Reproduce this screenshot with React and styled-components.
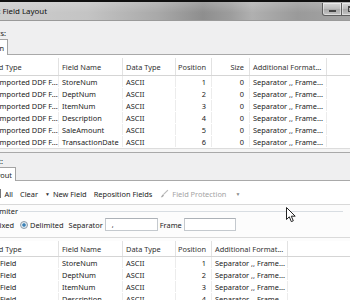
import React from "react";
import styled, { createGlobalStyle } from "styled-components";

const GlobalStyle = createGlobalStyle`
  html, body { margin: 0; padding: 0; background: #f0f0f0; }
  body { font-family: "Noto Sans", "Open Sans", sans-serif; font-size: 7.4px; color: #1b1b1b; }
  * { box-sizing: border-box; }
`;

const Window = styled.div`
  position: relative;
  width: 350px;
  height: 300px;
  overflow: hidden;
  background: #efeff0;
  display: flex;
  flex-direction: column;
`;

const TitleBar = styled.div`
  flex: none;
  height: 21px;
  border-top: 2px solid #101010;
  background:
    linear-gradient(180deg, rgba(255,255,255,0.18) 0%, rgba(255,255,255,0) 60%),
    linear-gradient(90deg, #cdcdcd 0%, #c4c4c4 25%, #a9a9a9 45%, #8e8e8e 58%, #9d9d9d 66%, #b0b0b0 72%, #9a9a9a 85%, #a4a4a4 100%);
  display: flex;
  align-items: center;
  justify-content: space-between;
  border-bottom: 1px solid #9a9a9a;
`;

const Title = styled.div`
  flex: none;
  width: 140px;
  margin-left: -93px;
  text-align: right;
  font-size: 7.9px;
  color: #111;
  white-space: nowrap;
`;

const CaptionButtons = styled.div`
  display: flex;
  align-self: flex-start;
  margin-top: 1px;
  margin-right: -13px;
`;

const CaptionButton = styled.div`
  width: ${(p) => p.$w}px;
  height: 13px;
  border: 1px solid #5e5e5e;
  border-top: none;
  border-radius: ${(p) => (p.$first ? "0 0 0 3px" : "0")};
  margin-left: -1px;
  background: linear-gradient(180deg, #d8d8d8 0%, #b9b9b9 50%, #a8a8a8 51%, #c4c4c4 100%);
  box-shadow: inset 0 0 0 1px rgba(255,255,255,0.45);
  display: flex;
  align-items: center;
  justify-content: center;
`;

const MinGlyph = styled.div`
  width: 7px;
  height: 2px;
  background: #444;
  margin-top: 4px;
`;

const MaxGlyph = styled.div`
  width: 8px;
  height: 6px;
  border: 1px solid #444;
  border-top-width: 2px;
`;

const Content = styled.div`
  flex: 1;
  margin-left: -40px;
  width: 390px;
  display: flex;
  flex-direction: column;
`;

const SectionHead = styled.div`
  display: flex;
  flex-direction: column;
  padding-top: ${(p) => p.$pt}px;
`;

const GroupLabel = styled.div`
  width: ${(p) => p.$w}px;
  text-align: right;
  height: 10px;
  line-height: 10px;
  white-space: nowrap;
  margin-bottom: ${(p) => p.$mb}px;
`;

const TabStrip = styled.div`
  display: flex;
  border-bottom: 1px solid #a9a9a9;
`;

const Tab = styled.div`
  width: ${(p) => p.$w}px;
  height: ${(p) => p.$h}px;
  margin-bottom: -1px;
  background: #fff;
  border: 1px solid #a3a3a3;
  border-bottom: none;
  text-align: right;
  padding-right: 3px;
  line-height: ${(p) => p.$h}px;
  white-space: nowrap;
`;

const Panel = styled.div`
  background: #fff;
  padding-top: ${(p) => p.$pt}px;
`;

const GridWrap = styled.div`
  display: flex;
  flex-direction: column;
`;

const Row = styled.div`
  display: grid;
  grid-template-columns: ${(p) => p.$cols};
  height: ${(p) => p.$h}px;
  background: #fff;
  border-bottom: 1px solid ${(p) => (p.$head ? "#d5d5d5" : "transparent")};
`;

const Cell = styled.div`
  border-right: 1px solid ${(p) => (p.$last ? "transparent" : p.$head ? "#e2e2e2" : "#ececec")};
  padding: 0 ${(p) => (p.$right ? 5 : 3)}px 0 ${(p) => p.$pl ?? 3}px;
  text-align: ${(p) => (p.$right ? "right" : "left")};
  white-space: nowrap;
  overflow: hidden;
  display: flex;
  align-items: center;
  justify-content: ${(p) => (p.$right ? "flex-end" : "flex-start")};
  color: ${(p) => (p.$head ? "#333" : "#1b1b1b")};
`;

const GridBottom = styled.div`
  height: 5px;
  border-top: 1px solid #dcdcdc;
  border-bottom: 1px solid #a9a9a9;
  background: #f4f4f4;
`;

const Toolbar = styled.div`
  height: 24px;
  background: #fff;
  border-bottom: 1px solid #d9d9d9;
  display: flex;
  align-items: center;
  padding-top: 2px;
`;

const ToolItem = styled.div`
  flex: none;
  display: flex;
  align-items: center;
  gap: 3px;
  white-space: nowrap;
  color: ${(p) => (p.$disabled ? "#a3a3a3" : "#1b1b1b")};
  margin-right: ${(p) => p.$mr ?? 7}px;
  width: ${(p) => (p.$w ? `${p.$w}px` : "auto")};
  justify-content: ${(p) => (p.$w ? "flex-end" : "flex-start")};
`;

const Caret = styled.span`
  font-size: 5px;
  color: ${(p) => (p.$disabled ? "#8a8a8a" : "#333")};
  margin-left: ${(p) => p.$ml ?? 0}px;
`;

const OptionsBox = styled.div`
  background: #fcfcfc;
  display: flex;
  flex-direction: column;
`;

const Legend = styled.div`
  display: flex;
  align-items: center;
  height: 10px;
  margin-top: 1px;
`;

const LegendText = styled.div`
  width: 58px;
  text-align: right;
  white-space: nowrap;
`;

const LegendLine = styled.div`
  flex: 1;
  height: 1px;
  background: #d8dde2;
  margin: 0 7px 0 2px;
`;

const OptionRow = styled.div`
  display: flex;
  align-items: center;
  height: 17px;
`;

const RadioLabel = styled.label`
  flex: none;
  display: flex;
  align-items: center;
  gap: 2px;
  white-space: nowrap;
  margin-right: ${(p) => p.$mr}px;
  width: ${(p) => (p.$w ? `${p.$w}px` : "auto")};
  justify-content: ${(p) => (p.$w ? "flex-end" : "flex-start")};
`;

const Radio = styled.span`
  width: 8px;
  height: 8px;
  border-radius: 50%;
  border: 1px solid #8b9aa8;
  background: ${(p) =>
    p.$on
      ? "radial-gradient(circle, #2d6fa3 0%, #4f92c4 35%, #d6e2ea 45%, #f5f7f9 100%)"
      : "radial-gradient(circle, #e8ecef 0%, #f8f9fa 100%)"};
`;

const FieldLabel = styled.span`
  white-space: nowrap;
  margin-right: 2px;
`;

const TextBox = styled.div`
  flex: none;
  width: ${(p) => p.$w}px;
  height: 13px;
  border: 1px solid #c4c9ce;
  border-top-color: #acb1b7;
  background: #fff;
  padding-left: 6px;
  line-height: 11px;
  margin-right: ${(p) => p.$mr}px;
`;

const BoxBottom = styled.div`
  height: 4px;
  border-top: 1px solid #dadada;
  margin-top: 4px;
`;

const Cursor = styled.svg`
  position: absolute;
  left: 286px;
  top: 207px;
  pointer-events: none;
`;

const topCols = "99px 64px 53px 36px 38px 77px 1fr";
const bottomCols = "99px 64px 53px 36px 76px 1fr";

const topRows = [
  ["StoreNum", "1"],
  ["DeptNum", "2"],
  ["ItemNum", "3"],
  ["Description", "4"],
  ["SaleAmount", "5"],
  ["TransactionDate", "6"],
];

function TopGrid() {
  return (
    <GridWrap>
      <Row $cols={topCols} $h={18} $head>
        <Cell $head $pl={27}>Field Type</Cell>
        <Cell $head>Field Name</Cell>
        <Cell $head>Data Type</Cell>
        <Cell $head $right>Position</Cell>
        <Cell $head $right>Size</Cell>
        <Cell $head>Additional Format...</Cell>
        <Cell $head $last />
      </Row>
      {topRows.map(([name, pos]) => (
        <Row key={name} $cols={topCols} $h={12}>
          <Cell $pl={37}>Imported DDF F...</Cell>
          <Cell>{name}</Cell>
          <Cell>ASCII</Cell>
          <Cell $right>{pos}</Cell>
          <Cell $right>0</Cell>
          <Cell>Separator ,, Frame...</Cell>
          <Cell $last />
        </Row>
      ))}
    </GridWrap>
  );
}

function BottomGrid() {
  return (
    <GridWrap>
      <Row $cols={bottomCols} $h={16} $head>
        <Cell $head $pl={27}>Field Type</Cell>
        <Cell $head>Field Name</Cell>
        <Cell $head>Data Type</Cell>
        <Cell $head $right>Position</Cell>
        <Cell $head>Additional Format...</Cell>
        <Cell $head $last />
      </Row>
      {topRows.map(([name, pos]) => (
        <Row key={name} $cols={bottomCols} $h={12}>
          <Cell $pl={40}>Field</Cell>
          <Cell>{name}</Cell>
          <Cell>ASCII</Cell>
          <Cell $right>{pos}</Cell>
          <Cell>Separator ,, Frame...</Cell>
          <Cell $last />
        </Row>
      ))}
    </GridWrap>
  );
}

export default function App() {
  return (
    <>
      <GlobalStyle />
      <Window>
        <TitleBar>
          <Title>Edit Dataset Field Layout</Title>
          <CaptionButtons>
            <CaptionButton $w={20} $first>
              <MinGlyph />
            </CaptionButton>
            <CaptionButton $w={22}>
              <MaxGlyph />
            </CaptionButton>
          </CaptionButtons>
        </TitleBar>
        <Content>
          <SectionHead $pt={7}>
            <GroupLabel $w={46} $mb={1}>Layouts:</GroupLabel>
            <TabStrip>
              <Tab $w={48} $h={16}>Design</Tab>
            </TabStrip>
          </SectionHead>
          <Panel $pt={3}>
            <TopGrid />
          </Panel>
          <GridBottom />
          <SectionHead $pt={3}>
            <GroupLabel $w={43} $mb={1}>Layout:</GroupLabel>
            <TabStrip>
              <Tab $w={56} $h={14}>Layout</Tab>
            </TabStrip>
          </SectionHead>
          <Toolbar>
            <ToolItem $w={53} $mr={7}>
              <svg width="9" height="9" viewBox="0 0 9 9">
                <rect x="0.5" y="0.5" width="8" height="8" fill="#fff" stroke="#777" />
                <path d="M2 4.5 L4 6.5 L7 2.5" fill="none" stroke="#2a6a2a" strokeWidth="1.2" />
              </svg>
              <span>All</span>
            </ToolItem>
            <ToolItem $mr={7}>Clear</ToolItem>
            <ToolItem $mr={7}>
              <Caret>▼</Caret>New Field
            </ToolItem>
            <ToolItem $mr={8}>Reposition Fields</ToolItem>
            <ToolItem $disabled $mr={0}>
              <svg width="9" height="9" viewBox="0 0 9 9">
                <path d="M7.5 0.8 L8.3 1.6 L4.2 5.6 L3.4 4.8 Z" fill="#b9b9b9" />
                <path d="M3.2 5.1 L4 5.9 C3.6 7.4 2.4 8.3 0.8 8.2 C1.6 7.5 1.7 6.3 3.2 5.1 Z" fill="#a9a9a9" />
              </svg>
              Field Protection
              <Caret $disabled $ml={6}>▼</Caret>
            </ToolItem>
          </Toolbar>
          <OptionsBox>
            <Legend>
              <LegendText>Delimiter</LegendText>
              <LegendLine />
            </Legend>
            <OptionRow>
              <RadioLabel $w={54} $mr={6}>
                <Radio />
                Fixed
              </RadioLabel>
              <RadioLabel $mr={5}>
                <Radio $on />
                Delimited
              </RadioLabel>
              <FieldLabel>Separator</FieldLabel>
              <TextBox $w={53} $mr={2}>,</TextBox>
              <FieldLabel>Frame</FieldLabel>
              <TextBox $w={52} $mr={0} />
            </OptionRow>
            <BoxBottom />
          </OptionsBox>
          <BottomGrid />
        </Content>
        <Cursor width="11" height="16" viewBox="0 0 11 16">
          <path d="M0.5 0.5 L0.5 12.5 L3.3 9.8 L5.3 14.6 L7.3 13.8 L5.3 9.2 L9.2 9.2 Z" fill="#fff" stroke="#222" strokeWidth="1" strokeLinejoin="round" />
        </Cursor>
      </Window>
    </>
  );
}
